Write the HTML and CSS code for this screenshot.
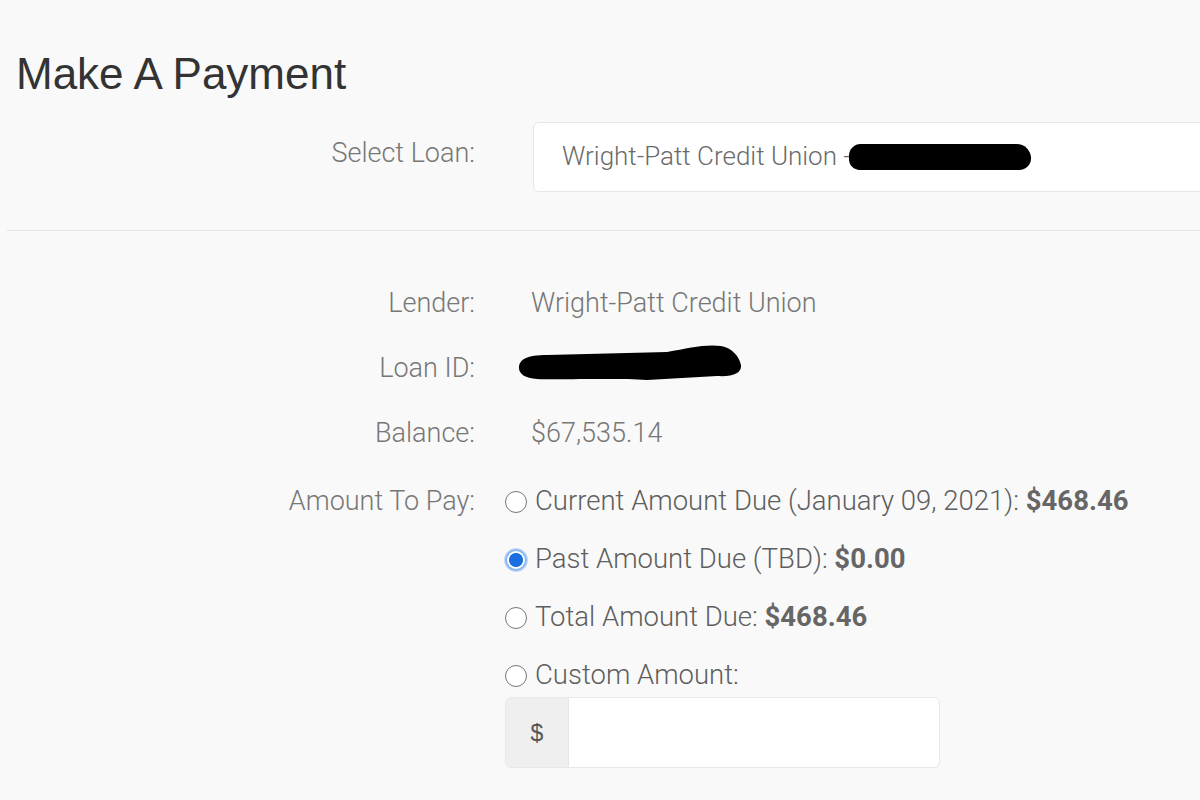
FILE: index.html
```html
<!DOCTYPE html>
<html>
<head>
<meta charset="utf-8">
<link rel="stylesheet" href="styles.css">
</head>
<body>
<div class="page">
  <h1 class="title">Make A Payment</h1>

  <div class="row select-row">
    <div class="label">Select Loan:</div>
    <div class="select">
      <span class="select-text">Wright-Patt Credit Union -</span><span class="blob-sm"></span>
    </div>
  </div>

  <div class="divider"></div>

  <div class="details">
    <div class="row">
      <div class="label">Lender:</div>
      <div class="value">Wright-Patt Credit Union</div>
    </div>
    <div class="row">
      <div class="label">Loan ID:</div>
      <div class="value">
        <svg class="blob-lg" width="226" height="40" viewBox="0 0 226 40">
          <path d="M2,26 C2,17 10,13 30,13 L150,10 C172,6 188,2 204,4 C215,6 222,14 224,23 C225,31 216,35 200,34 L130,38 C100,36 40,38 20,37 C8,36 2,32 2,26 Z" fill="#000"/>
        </svg>
      </div>
    </div>
    <div class="row">
      <div class="label">Balance:</div>
      <div class="value">$67,535.14</div>
    </div>
    <div class="row amount-row">
      <div class="label">Amount To Pay:</div>
      <div class="options">
        <div class="option"><span class="radio"></span><span>Current Amount Due (January 09, 2021): <b>$468.46</b></span></div>
        <div class="option"><span class="radio checked"></span><span>Past Amount Due (TBD): <b>$0.00</b></span></div>
        <div class="option"><span class="radio"></span><span>Total Amount Due: <b>$468.46</b></span></div>
        <div class="option"><span class="radio"></span><span>Custom Amount:</span></div>
        <div class="input-group">
          <div class="addon">$</div>
          <div class="input"></div>
        </div>
      </div>
    </div>
  </div>
</div>
</body>
</html>
```

FILE: styles.css
```css
html, body {
  margin: 0;
  padding: 0;
  background: #f9f9f9;
  overflow: hidden;
}
body {
  width: 1200px;
  height: 800px;
  font-family: Roboto, "Liberation Sans", sans-serif;
  color: #777;
}
.title {
  margin: 49px 0 0 16px;
  font-family: "Liberation Sans", Arial, sans-serif;
  font-weight: normal;
  font-size: 44px;
  line-height: 49px;
  color: #333;
}
.row {
  display: grid;
  grid-template-columns: 475px 1fr;
  column-gap: 30px;
  font-size: 27px;
  font-weight: 300;
  line-height: 32px;
}
.label {
  text-align: right;
  color: #777;
}
.select-row {
  margin-top: 24px;
}
.select-row .label {
  padding-top: 15px;
}
.select {
  margin-left: 28px;
  width: 720px;
  height: 70px;
  box-sizing: border-box;
  background: #fff;
  border: 1px solid #e6e6e6;
  border-radius: 6px;
  padding: 17px 0 0 28px;
  font-size: 26px;
  font-weight: 300;
  color: #6a6a6a;
  white-space: nowrap;
}
.blob-sm {
  display: inline-block;
  width: 182px;
  height: 26px;
  margin-left: -2px;
  background: #000;
  border-radius: 13px 16px 13px 12px;
  vertical-align: -5px;
}
.divider {
  margin: 38px 0 0 7px;
  height: 1px;
  background: #e4e4e4;
}
.details {
  padding-top: 56px;
}
.details .row + .row {
  margin-top: 33px;
}
.details .row.amount-row {
  margin-top: 36px;
}
.value {
  padding-left: 26px;
  color: #777;
}
.blob-lg {
  display: block;
  margin: -10px 0 0 -14px;
}
.options {
  display: flex;
  flex-direction: column;
  gap: 26px;
  font-size: 27.5px;
  font-weight: 300;
  color: #5e5e5e;
}
.option {
  display: flex;
  align-items: flex-start;
  gap: 8px;
  white-space: nowrap;
}
.option b {
  font-weight: 700;
  color: #666;
}
.radio {
  flex: none;
  width: 22px;
  height: 22px;
  margin-top: 6px;
  box-sizing: border-box;
  border: 1.3px solid #777;
  border-radius: 50%;
  background: #fff;
}
.radio.checked {
  border: 2px solid #8bb8f0;
  background: radial-gradient(circle, #1a6fe0 0 6.5px, #fff 7.5px);
  box-shadow: 0 0 0 1px #c7dcf8;
}
.input-group {
  display: flex;
  margin-top: -20px;
  width: 435px;
  height: 71px;
  box-sizing: border-box;
  border: 1px solid #e8e8e8;
  border-radius: 6px;
  background: #fff;
  overflow: hidden;
}
.addon {
  width: 62px;
  background: #efefef;
  border-right: 1px solid #e6e6e6;
  display: flex;
  align-items: center;
  justify-content: center;
  font-family: "Liberation Sans", Arial, sans-serif;
  font-size: 23px;
  color: #555;
}
.input {
  flex: 1;
}
```
